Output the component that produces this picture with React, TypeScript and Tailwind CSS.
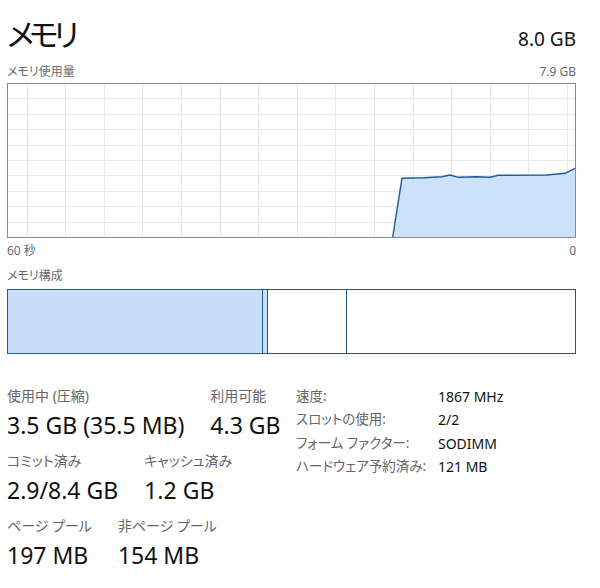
const GRID_X = Array.from({ length: 15 }, (_, i) => 19.5 + i * 38.6);
const GRID_Y = Array.from({ length: 9 }, (_, i) => 15.4 * (i + 1));

const USAGE: [number, number][] = [
  [385.7, 154], [395, 95.3], [416.3, 94.7], [434.7, 93.7], [443, 92], [451.3, 94.3],
  [469.7, 93.7], [483, 94.3], [491.3, 92.3], [539.7, 92], [558, 90.3], [568, 85.3],
];

function UsageGraph() {
  const line = USAGE.map(([x, y]) => `${x},${y}`).join(" ");
  const area = `${line} 568,154`;
  return (
    <svg width="569" height="155" viewBox="0 0 569 155" className="block">
      {GRID_X.map((x) => (
        <line key={x} x1={Math.round(x) + 0.5} y1="0" x2={Math.round(x) + 0.5} y2="155" stroke="#e8e8e8" />
      ))}
      {GRID_Y.map((y) => (
        <line key={y} x1="0" y1={Math.round(y) + 0.5} x2="569" y2={Math.round(y) + 0.5} stroke="#e8e8e8" />
      ))}
      <polygon points={area} fill="#c7dffb" fillOpacity="0.9" />
      <polyline points={line} fill="none" stroke="#1d5c9b" strokeWidth="1.4" />
      <rect x="0.5" y="0.5" width="568" height="154" fill="none" stroke="#8a8a8a" />
    </svg>
  );
}

function Stat({ label, value }: { label: string; value: string }) {
  return (
    <div className="flex flex-col">
      <span className="h-[20px] text-[14px] leading-[20px] text-[#666]">{label}</span>
      <span className="mt-[3px] h-[32px] text-[23px] leading-[32px] text-[#111]">{value}</span>
    </div>
  );
}

const SPECS = [
  ["速度:", "1867 MHz"],
  ["スロットの使用:", "2/2"],
  ["フォーム ファクター:", "SODIMM"],
  ["ハードウェア予約済み:", "121 MB"],
];

export default function App() {
  return (
    <div className="h-[588px] w-[600px] bg-white font-['Noto_Sans','Noto_Sans_CJK_JP',sans-serif] [font-feature-settings:'palt']">
      <div className="ml-[7px] w-[569px] pt-[14px]">
        {/* Header */}
        <div className="flex h-[40px] items-baseline justify-between">
          <h1 className="text-[31px] leading-[40px] tracking-[-5px] text-[#111]">メモリ</h1>
          <span className="text-[19px] text-[#111]">8.0 GB</span>
        </div>

        <div className="mt-[10px] flex h-[16px] items-center justify-between text-[12px] text-[#6a6a6a]">
          <span>メモリ使用量</span>
          <span>7.9 GB</span>
        </div>

        <div className="mt-[3px]">
          <UsageGraph />
        </div>

        <div className="mt-[5px] flex h-[16px] items-center justify-between text-[12px] text-[#6a6a6a]">
          <span>60 秒</span>
          <span>0</span>
        </div>

        <div className="mt-[9px] flex h-[16px] items-center text-[12px] text-[#6a6a6a]">
          <span>メモリ構成</span>
        </div>

        {/* Composition bar */}
        <div className="mt-[5px] flex h-[65px] border border-[#22598f]">
          <div className="w-[255px] border-r border-[#22598f] bg-[#c7dffb]" />
          <div className="w-[5px] border-r border-[#22598f] bg-[#c7dffb]" />
          <div className="w-[79px] border-r border-[#22598f]" />
          <div className="flex-1" />
        </div>

        {/* Stats */}
        <div className="mt-[32px] flex items-start">
          <div className="flex w-[289px] flex-col gap-[10px]">
            <div className="flex gap-[26px]">
              <Stat label="使用中 (圧縮)" value="3.5 GB (35.5 MB)" />
              <Stat label="利用可能" value="4.3 GB" />
            </div>
            <div className="flex gap-[26px]">
              <Stat label="コミット済み" value="2.9/8.4 GB" />
              <Stat label="キャッシュ済み" value="1.2 GB" />
            </div>
            <div className="flex gap-[26px]">
              <Stat label="ページ プール" value="197 MB" />
              <Stat label="非ページ プール" value="154 MB" />
            </div>
          </div>
          <div className="-mt-[1px] grid grid-cols-[142px_auto] content-start text-[14px] leading-[23.4px]">
            {SPECS.map(([k, v]) => (
              <div key={k} className="contents">
                <span className="text-[13.5px] text-[#666]">{k}</span>
                <span className="text-[#111]">{v}</span>
              </div>
            ))}
          </div>
        </div>
      </div>
    </div>
  );
}
